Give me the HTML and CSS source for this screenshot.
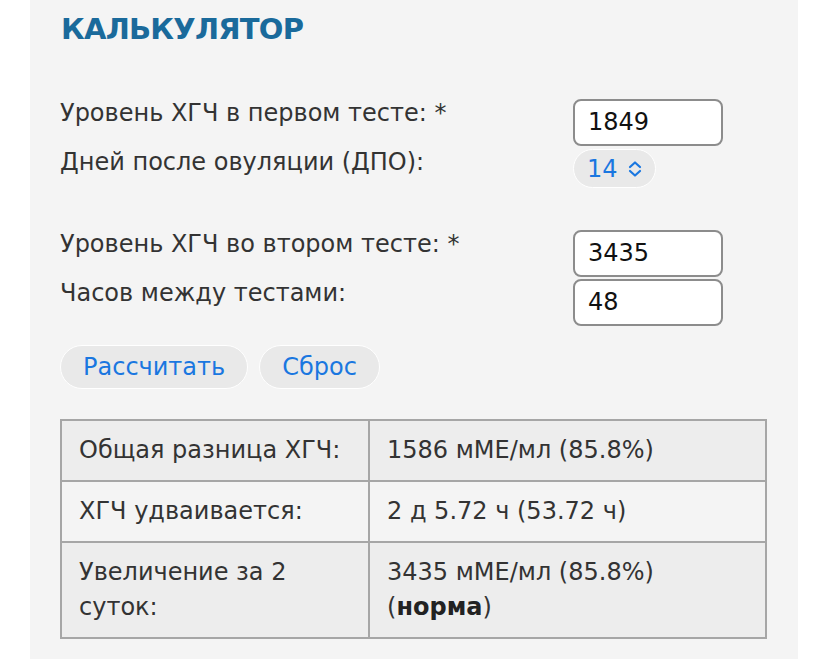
FILE: index.html
```html
<!DOCTYPE html>
<html lang="ru">
<head>
<meta charset="utf-8">
<title>Калькулятор ХГЧ</title>
<link rel="stylesheet" href="styles.css">
</head>
<body>
<div class="panel">
  <h1 class="title">КАЛЬКУЛЯТОР</h1>
  <div class="group">
    <label class="label" for="h1">Уровень ХГЧ в первом тесте: *</label>
    <input class="field" id="h1" type="text" value="1849">
    <label class="label">Дней после овуляции (ДПО):</label>
    <div class="select"><span>14</span><svg class="chev" width="14" height="18" viewBox="0 0 14 18"><path d="M2 7 L7 2.5 L12 7 M2 11 L7 15.5 L12 11" fill="none" stroke="#1a77e0" stroke-width="2.2" stroke-linecap="round" stroke-linejoin="round"/></svg></div>
  </div>
  <div class="group second">
    <label class="label" for="h2">Уровень ХГЧ во втором тесте: *</label>
    <input class="field" id="h2" type="text" value="3435">
    <label class="label" for="hrs">Часов между тестами:</label>
    <input class="field" id="hrs" type="text" value="48">
  </div>
  <div class="buttons">
    <button class="btn">Рассчитать</button>
    <button class="btn">Сброс</button>
  </div>
  <table class="result">
    <tr class="odd"><td class="c1">Общая разница ХГЧ:</td><td>1586 мМЕ/мл (85.8%)</td></tr>
    <tr><td class="c1">ХГЧ удваивается:</td><td>2 д 5.72 ч (53.72 ч)</td></tr>
    <tr class="odd"><td class="c1">Увеличение за 2 суток:</td><td>3435 мМЕ/мл (85.8%) <span class="verdict">(<b>норма</b>)</span></td></tr>
  </table>
</div>
</body>
</html>
```
FILE: styles.css
```css
html, body {
  margin: 0;
  padding: 0;
  background: #ffffff;
}
body {
  font-family: "DejaVu Sans", Verdana, sans-serif;
  color: #333333;
}
.panel {
  margin-left: 30px;
  width: 768px;
  box-sizing: border-box;
  min-height: 659px;
  background: #f4f4f4;
  padding: 12px 30px 0 30px;
}
.title {
  margin: 0 0 0 1px;
  font-size: 29px;
  line-height: 1.2;
  font-weight: bold;
  color: #1a6a9b;
  letter-spacing: -0.75px;
}
.group {
  margin-top: 52px;
  display: grid;
  grid-template-columns: 513px 150px;
  row-gap: 2px;
  align-items: start;
}
.group.second {
  margin-top: 42px;
}
.label {
  font-size: 24px;
  line-height: 28px;
  color: #333333;
}
.field {
  box-sizing: border-box;
  width: 150px;
  height: 47px;
  border: 2px solid #8c8c8c;
  border-radius: 8px;
  background: #ffffff;
  padding: 0 13px;
  font-family: "DejaVu Sans", Verdana, sans-serif;
  font-size: 24px;
  color: #111111;
  outline: none;
}
.select {
  box-sizing: border-box;
  width: 83px;
  height: 39px;
  margin-top: 1px;
  border: 1px solid #ffffff;
  border-radius: 20px;
  background: #e9e9e9;
  display: flex;
  align-items: center;
  padding-left: 13px;
  padding-top: 2px;
  gap: 10px;
  font-size: 24px;
  color: #1a77e0;
}
.chev {
  display: block;
}
.buttons {
  margin-top: 19px;
  display: flex;
  gap: 11px;
}
.btn {
  box-sizing: border-box;
  height: 44px;
  padding: 0 22px;
  border: 1px solid #ffffff;
  border-radius: 22px;
  background: #e9e9e9;
  font-family: "DejaVu Sans", Verdana, sans-serif;
  font-size: 24px;
  color: #1a77e0;
}
.result {
  margin-top: 30px;
  width: 707px;
  border-collapse: collapse;
  border: 2px solid #a6a6a6;
  font-size: 24px;
  line-height: 35px;
  color: #333333;
}
.result td {
  border: 2px solid #a6a6a6;
  padding: 12px 17px;
  vertical-align: top;
  text-align: left;
}
.result td.c1 {
  width: 272px;
}
.result tr.odd td {
  background: #ededed;
}
.verdict {
  display: inline-block;
}
.result b {
  color: #222222;
}
```
